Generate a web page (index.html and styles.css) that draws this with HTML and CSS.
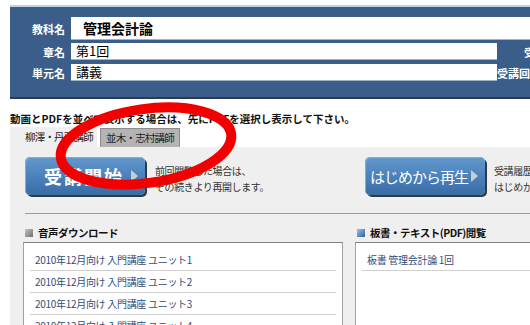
FILE: index.html
```html
<!DOCTYPE html>
<html lang="ja">
<head>
    <meta charset="UTF-8">
    <title>受講画面</title>
    <link rel="stylesheet" href="styles.css">
</head>
<body>
<div class="page">
    <div class="course">
        <div class="row">
            <span class="label">教科名</span>
            <div class="field field-title">管理会計論</div>
        </div>
        <div class="row">
            <span class="label">章名</span>
            <div class="field field-short">第1回</div>
            <span class="side side-first">受講日</span>
        </div>
        <div class="row">
            <span class="label">単元名</span>
            <div class="field field-short">講義</div>
            <span class="side">受講回</span>
        </div>
    </div>

    <p class="notice">動画とPDFを並べて表示する場合は、先にPDFを選択し表示して下さい。</p>

    <div class="tabs">
        <span class="tab tab-active">柳澤・丹羽講師</span>
        <span class="tab">並木・志村講師</span>
    </div>

    <div class="content">
        <div class="actions">
            <div class="action action-first">
                <button class="play-btn play-start">受講開始<span class="arrow"></span></button>
                <p class="action-text">前回閲覧した場合は、<br>その続きより再開します。</p>
            </div>
            <div class="action">
                <button class="play-btn play-restart">はじめから再生<span class="arrow"></span></button>
                <p class="action-text">受講履歴をリセットし、<br>はじめから再生します。</p>
            </div>
        </div>

        <div class="sections">
            <div class="section section-audio">
                <h3 class="section-title"><span class="icon icon-gray"></span>音声ダウンロード</h3>
                <ul class="list">
                    <li>2010年12月向け 入門講座 ユニット1</li>
                    <li>2010年12月向け 入門講座 ユニット2</li>
                    <li>2010年12月向け 入門講座 ユニット3</li>
                    <li>2010年12月向け 入門講座 ユニット4</li>
                </ul>
            </div>
            <div class="section section-pdf">
                <h3 class="section-title"><span class="icon icon-blue"></span>板書・テキスト(PDF)閲覧</h3>
                <ul class="list">
                    <li>板書 管理会計論 1回</li>
                </ul>
            </div>
        </div>
    </div>

    <!-- red marker drawn over the tabs -->
    <svg class="marker" width="530" height="325" viewBox="0 0 530 325">
        <ellipse cx="146" cy="141" rx="86" ry="37" transform="rotate(-8 146 141)"></ellipse>
    </svg>
</div>
</body>
</html>
```

FILE: styles.css
```css
html, body {
    margin: 0;
    padding: 0;
    overflow: hidden;
    background: #fff;
}
body {
    font-family: "Noto Sans CJK JP", "Liberation Sans", sans-serif;
    color: #222;
    width: 530px;
    height: 325px;
}
.page {
    position: relative;
    width: 560px;
    padding-left: 10px;
}

/* course header */
.course {
    margin-top: 5px;
    border-top: 2px solid #bed1e4;
    border-bottom: 2px solid #2b3b4e;
    background: #3a5e89;
    padding: 10px 0 16px;
}
.row {
    display: flex;
    align-items: center;
    margin-bottom: 4px;
}
.row:first-child {
    margin-bottom: 3px;
}
.row:last-child {
    margin-bottom: 0;
}
.label {
    width: 55px;
    margin-right: 6px;
    text-align: right;
    color: #fff;
    font-weight: bold;
    font-size: 11px;
    line-height: 14px;
}
.field {
    background: #fff;
    border-bottom: 1px solid #9fb3c8;
    box-sizing: border-box;
    font-size: 13px;
    color: #000;
    padding-left: 5px;
}
.field-title {
    flex: 1;
    height: 23px;
    line-height: 23px;
    font-size: 14px;
    font-weight: bold;
    letter-spacing: 0;
    padding-left: 12px;
}
.field-short {
    width: 426px;
    height: 17px;
    line-height: 16px;
}
.side {
    color: #fff;
    font-weight: bold;
    font-size: 11px;
    line-height: 14px;
}
.side-first {
    padding-left: 27px;
}

.notice {
    margin: 13px 0 0;
    font-size: 10.5px;
    line-height: 14px;
    font-weight: bold;
    color: #111;
}

/* tabs */
.tabs {
    display: flex;
    align-items: flex-end;
    height: 20px;
    margin-top: 1px;
}
.tab {
    width: 80px;
    height: 19px;
    box-sizing: border-box;
    font-size: 10.5px;
    line-height: 18px;
    letter-spacing: -0.8px;
    text-align: center;
    background: #b4b4b4;
    border: 1px solid #8c8c8c;
    border-bottom: none;
    margin-left: 3px;
    color: #222;
}
.tab-active {
    width: 87px;
    height: 20px;
    line-height: 20px;
    border: none;
    background: #efefef;
    margin-left: 0;
    text-align: left;
    padding-left: 15px;
}

.content {
    background: #efefef;
    padding: 10px 0 0 15px;
    height: 200px;
}

/* play buttons */
.actions {
    display: flex;
    padding-bottom: 18px;
    border-bottom: 1px solid #9a9a9a;
}
.action {
    display: flex;
    flex-shrink: 0;
    gap: 10px;
}
.action + .action {
    gap: 9px;
}
.action-first {
    width: 340px;
}
.play-btn {
    position: relative;
    flex-shrink: 0;
    width: 120px;
    height: 38px;
    border: none;
    border-radius: 5px;
    background: linear-gradient(#6399cd, #4a80ba 55%, #3a6ca5);
    box-shadow: 2px 2px 0 #2e3a46, inset 1px 1px 0 #7fb0dd;
    color: #fff;
    font-family: "Noto Sans CJK JP", sans-serif;
    text-align: left;
    padding: 0;
    white-space: nowrap;
}
.play-start {
    font-size: 18px;
    font-weight: bold;
    letter-spacing: 2px;
    padding-left: 19px;
}
.play-restart {
    font-size: 15px;
    letter-spacing: -1px;
    padding-left: 5px;
}
.arrow {
    position: absolute;
    right: 7px;
    top: 13px;
    width: 0;
    height: 0;
    border-top: 6px solid transparent;
    border-bottom: 6px solid transparent;
    border-left: 7px solid #c9cdd2;
}
.action-text {
    margin: 6px 0 0;
    font-size: 10px;
    line-height: 16px;
    letter-spacing: -0.4px;
    color: #333;
    white-space: nowrap;
}

/* lists */
.sections {
    display: flex;
    gap: 12px;
    margin-left: -2px;
    margin-top: 12px;
}
.section-audio {
    width: 320px;
}
.section-pdf {
    flex: 1;
}
.section-title {
    margin: 0 0 2px;
    padding-left: 2px;
    display: flex;
    align-items: center;
    gap: 5px;
    font-size: 10.5px;
    line-height: 14px;
    letter-spacing: -0.5px;
    font-weight: bold;
    color: #111;
}
.icon {
    display: inline-block;
    width: 8px;
    height: 8px;
}
.icon-gray {
    background: linear-gradient(135deg, #c4c4c4, #707070);
}
.icon-blue {
    background: linear-gradient(135deg, #9cc4ea, #2f5f99);
}
.list {
    list-style: none;
    margin: 0;
    padding: 6px 6px 0;
    background: #fff;
    border: 1px solid #a0a0a0;
    border-top-color: #808080;
    height: 120px;
}
.list li {
    font-size: 10px;
    line-height: 21px;
    letter-spacing: -0.3px;
    padding-left: 5px;
    color: #2f4d78;
    border-bottom: 1px solid #cfcfcf;
}

/* annotation */
.marker {
    position: absolute;
    left: 0;
    top: 0;
    pointer-events: none;
}
.marker ellipse {
    fill: none;
    stroke: #f20000;
    stroke-width: 10;
}
```
